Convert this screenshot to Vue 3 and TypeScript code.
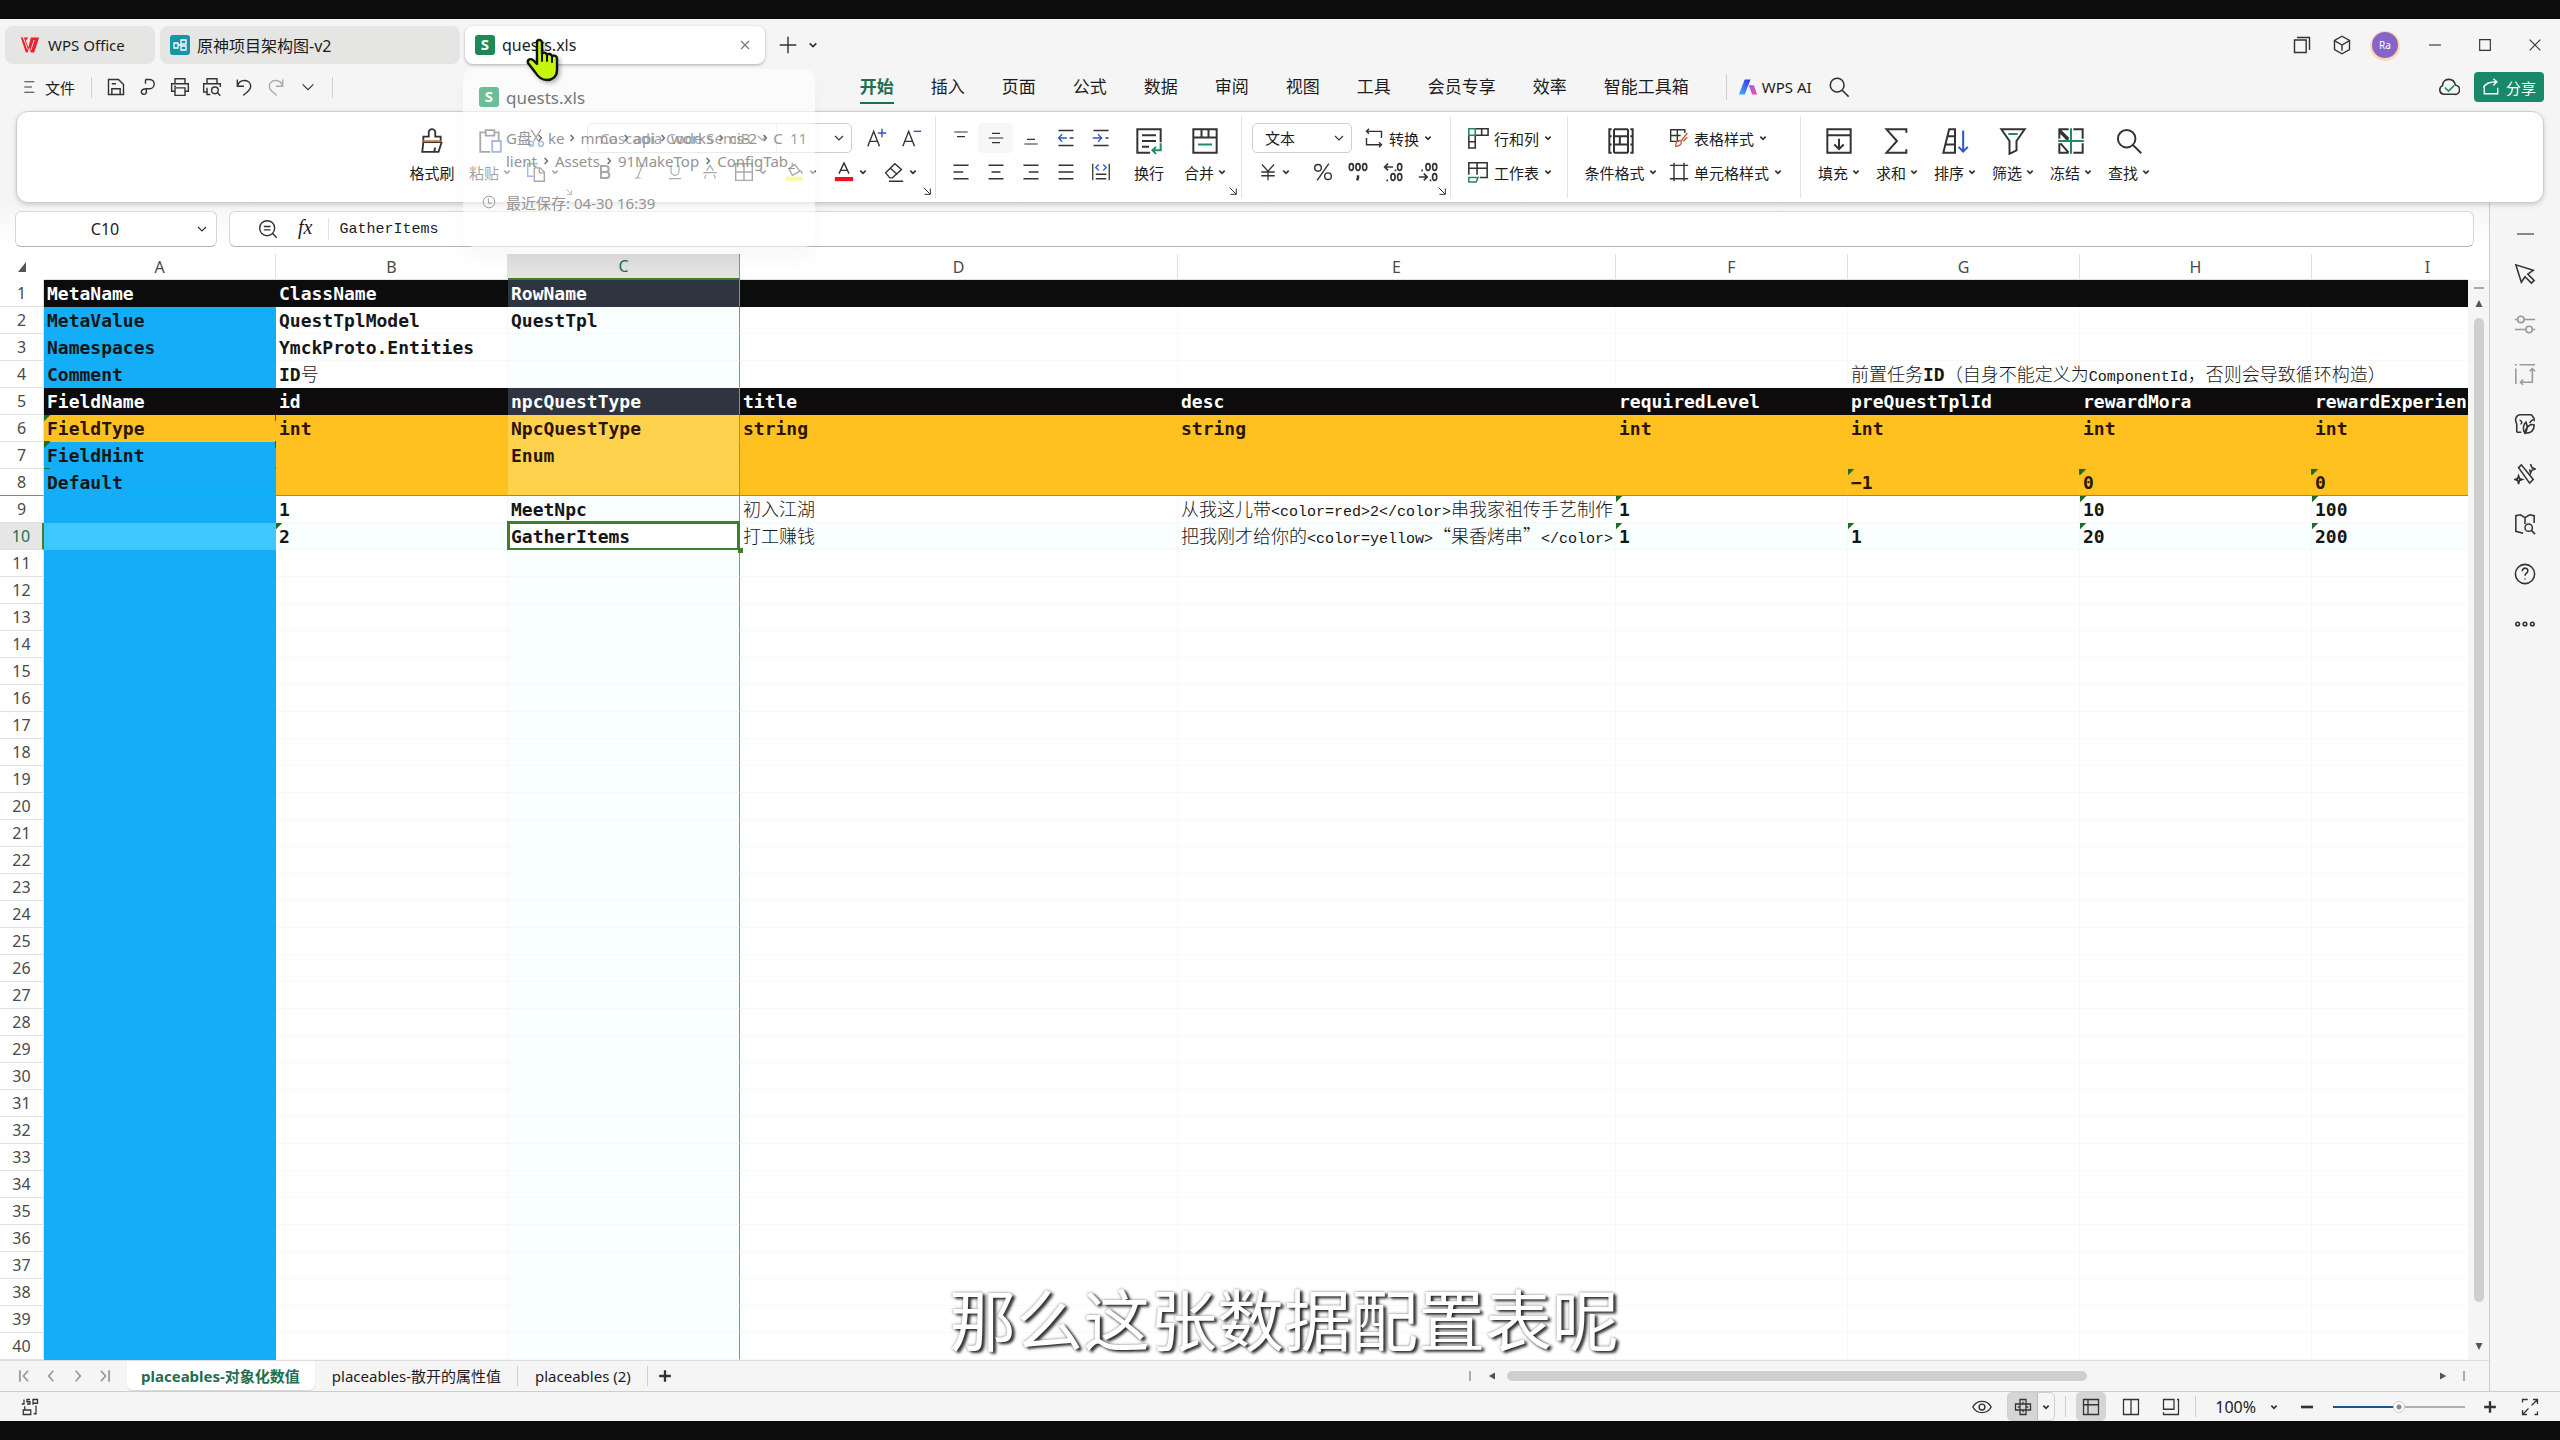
<script setup lang="ts">
import { ref } from 'vue'

type Run = { text: string; kind: 'bold' | 'latin' | 'song' }
type Cell = { text?: string; flag?: boolean; song?: boolean }
type Row = { n: number; tone: string; cells: Cell[] }

const columns = ['A', 'B', 'C', 'D', 'E', 'F', 'G', 'H', 'I']
const wide = ['D', 'E']

const c = (text = '', flag = false): Cell => ({ text, flag })
const s = (text: string): Cell => ({ text, song: true })
const filled: Record<number, { tone: string; cells: Cell[] }> = {
  1: { tone: 'dark', cells: [c('MetaName'), c('ClassName'), c('RowName')] },
  2: { tone: 'plain', cells: [c('MetaValue'), c('QuestTplModel'), c('QuestTpl')] },
  3: { tone: 'plain', cells: [c('Namespaces'), c('YmckProto.Entities')] },
  4: {
    tone: 'plain',
    cells: [c('Comment'), c('ID号'), c(), c(), c(), c(), s('前置任务*ID*（自身不能定义为ComponentId，否则会导致循环构造）')],
  },
  5: {
    tone: 'dark',
    cells: [c('FieldName'), c('id'), c('npcQuestType'), c('title'), c('desc'), c('requiredLevel'), c('preQuestTplId'), c('rewardMora'), c('rewardExperien')],
  },
  6: {
    tone: 'gold all',
    cells: [c('FieldType', true), c('int'), c('NpcQuestType'), c('string'), c('string'), c('int'), c('int'), c('int'), c('int')],
  },
  7: { tone: 'gold', cells: [c('FieldHint', true), c(), c('Enum')] },
  8: { tone: 'gold frozen', cells: [c('Default'), c(), c(), c(), c(), c(), c('−1', true), c('0', true), c('0', true)] },
  9: {
    tone: 'plain',
    cells: [c(), c('1'), c('MeetNpc'), s('初入江湖'), s('从我这儿带<color=red>2</color>串我家祖传手艺制作'), c('1', true), c(), c('10', true), c('100', true)],
  },
  10: {
    tone: 'plain current',
    cells: [c(), c('2', true), c('GatherItems'), s('打工赚钱'), s('把我刚才给你的<color=yellow>“果香烤串”</color>'), c('1', true), c('1', true), c('20', true), c('200', true)],
  },
}

const rows: Row[] = Array.from({ length: 40 }, (_, i) => {
  const src = filled[i + 1]
  return {
    n: i + 1,
    tone: src ? src.tone : 'plain',
    cells: columns.map((_col, j) => (src && src.cells[j]) || {}),
  }
})

/* Splits a cell into runs: *x* is bold, ASCII follows the cell's face, the rest is CJK. */
function runs(cell: Cell): Run[] {
  const parts = (cell.text || '').match(/\*[^*]+\*|[\x20-\x29\x2b-\x7e−]+|[^\x20-\x7e−]+/g) || []
  return parts.map((p) => {
    if (p[0] === '*') return { text: p.slice(1, -1), kind: 'bold' }
    if (/^[\x20-\x7e−]/.test(p)) return { text: p, kind: cell.song ? 'latin' : 'bold' }
    return { text: p, kind: 'song' }
  })
}

const menu = ['开始', '插入', '页面', '公式', '数据', '审阅', '视图', '工具', '会员专享', '效率', '智能工具箱']
const quick = ['save', 'export', 'print', 'preview', 'undo', 'redo', 'chev']
const side = ['cursor', 'sliders', 'frame', 'leaf', 'wand', 'book', 'help', 'dots']
const finals = [
  ['fill', '填充'],
  ['sum', '求和'],
  ['sort', '排序'],
  ['filter', '筛选'],
  ['freeze', '冻结'],
  ['search', '查找'],
]
const crumbs1 = ['G盘', 'ke', 'mmo', 'api', 'works', 'cs-2', 'C']
const crumbs2 = ['lient', 'Assets', '91MakeTop', 'ConfigTab_']

const cellName = ref('C10')
const formula = ref('GatherItems')
const zoom = ref(50)

const G = '#1f8a63'
const B = '#2f55c4'
const icons: Record<string, string> = {
  chev: '<path d="M4 8l8 8 8-8"/>',
  close: '<path d="M4 4l16 16M20 4L4 20"/>',
  plus: '<path d="M12 2v20M2 12h20"/>',
  minus: '<path d="M3 12h18"/>',
  menu: '<path d="M4 3h17M4 12h13M4 21h17"/>',
  save: '<path d="M3 3h12l6 6v12H3zM7 21v-7h10v7M7 8h5"/>',
  export: '<path d="M9 3h5a5 5 0 0 1 0 11h-4c-3 0-6 1-6 4s5 4 6 1V14M9 3v5"/>',
  print: '<path d="M6 8V2h12v6M6 17H2V8h20v9h-4M6 13h12v9H6zM5 11h2"/>',
  preview: '<path d="M6 8V2h12v6M7 18H2V8h20v4M6 13v8h4"/><circle cx="15.500" cy="16" r="4"/><path d="M18.500 19l3.500 3.500"/>',
  undo: '<path d="M4 3v8h8M4 11C7 1 20 3 20 11c0 5-4 7-9 11"/>',
  redo: '<path d="M20 3v8h-8M20 11C17 1 4 3 4 11c0 5 4 7 9 11" stroke="#aaa"/>',
  search: '<circle cx="10" cy="10" r="7.500"/><path d="M15.500 15.500l7 7"/>',
  zoomout: '<circle cx="11" cy="11" r="9"/><path d="M17.500 17.500l5 5M7 9h8M7 13h8"/>',
  windows: '<path d="M3 6h14v15H3zM6 3h15v15"/>',
  box: '<path d="M12 1.500l9 5v11l-9 5-9-5v-11zM3.500 7l8.500 5 8.500-5M12 12v7"/>',
  max: '<path d="M4 4h16v16H4z"/>',
  cloud: `<path d="M6 20a5 5 0 0 1-1-9.500C5 2 17 1 19 10a5 5 0 0 1-1 10z"/><path d="M7.500 12.500l4 4 6-6" stroke="${G}"/>`,
  share: '<path d="M3 11v10h18v-8M2 13c2-6 8-8 18-8M15 1l5 4-5 5"/>',
  brush: '<path d="M9 8V4a3 3 0 0 1 6 0v4h5v5H4V8zM4 13l-1 9h15l3-9"/><path d="M4 12h16" stroke="#e07a4a"/><path d="M14 22l1-4"/>',
  paste: `<path d="M8 4H3v18h9M16 4h4v7M8 2h8v5H8z"/><path d="M14 12h8v10h-8z" stroke="${B}"/>`,
  cut: `<path d="M6 2l9 14M18 2L9 16"/><circle cx="6" cy="19" r="3" stroke="${B}"/><circle cx="18" cy="19" r="3" stroke="${B}"/>`,
  copy: `<path d="M9 17H2V2h12" stroke="${B}"/><path d="M10 7h7l5 5v11H10zM16 7v6h6"/>`,
  bold: '<path d="M6 3h7a4.500 4.500 0 0 1 0 9H6zM6 12h8a4.500 4.500 0 0 1 0 9H6z" stroke-width="3"/>',
  italic: '<path d="M10 3h9M4 21h9M15 3L8 21"/>',
  under: '<path d="M6 2v9a6 6 0 0 0 12 0V2M3 22h18"/>',
  strike: '<path d="M7 10l5-8 5 8M2 13h20M6 16l-2 6M18 16l2 6"/>',
  borders: '<path d="M2 2h20v20H2zM12 2v20M2 12h20"/>',
  paint: '<path d="M10 1v5M6 8l7-5 6 8-9 5zM20 10l2 4"/><path d="M2 20h20" stroke="#f2ee1e" stroke-width="5"/>',
  color: '<path d="M6 14l6-13 6 13M8 10h8"/><path d="M1 20.500h22" stroke="#e8131f" stroke-width="5"/>',
  erase: '<path d="M2 13L13 2l8 7-11 10H7zM7 7l9 8M6 23h17"/>',
  fontup: `<path d="M1 22L8 4l7 18M3 16h10"/><path d="M18 1v10M13 6h10" stroke="${B}"/>`,
  fontdown: `<path d="M1 22L8 4l7 18M3 16h10"/><path d="M14 4h9" stroke="${B}"/>`,
  vtop: '<path d="M2 3h20M6 10h12"/>',
  vmid: '<path d="M6 5h12M1 12h22M6 19h12"/>',
  vbot: '<path d="M6 14h12M2 21h20"/>',
  outdent: `<path d="M2 2h20M2 22h20M17 12h5"/><path d="M13 12H2M7 7l-5 5 5 5" stroke="${B}"/>`,
  indent: `<path d="M2 2h20M2 22h20M18 12h4"/><path d="M1 12h12M8 7l5 5-5 5" stroke="${B}"/>`,
  left: '<path d="M2 3h20M2 12h13M2 21h20"/>',
  center: '<path d="M2 3h20M6 12h12M2 21h20"/>',
  right: '<path d="M2 3h20M9 12h13M2 21h20"/>',
  justify: '<path d="M2 3h20M2 12h20M2 21h20"/>',
  distribute: `<path d="M1 1v22M23 1v22M5 15h14M5 21h14"/><path d="M9 2L5 6l4 4M15 2l4 4-4 4" stroke="${B}"/>`,
  wrap: `<path d="M22 13V2H2v20h11M6 7h12M6 12h12M6 17h6"/><path d="M22 14v6h-7M18 17l-3 3 3 3" stroke="${G}"/>`,
  merge: `<path d="M2 2h20v20H2zM2 9h20M9 2v7M15 2v7"/><path d="M6 15h12" stroke="${G}"/>`,
  convert: '<path d="M6 1L3 4l3 3M3 4h18v8M18 23l3-3-3-3M21 20H3v-8"/>',
  yen: '<path d="M4 2l8 9 8-9M12 11v12M3 12h18M3 17h18"/>',
  percent: '<path d="M19 2L5 22"/><circle cx="6" cy="7" r="4"/><circle cx="18" cy="17" r="4"/>',
  thousand: '<g stroke-width="2"><ellipse cx="4" cy="6" rx="2.500" ry="4"/><ellipse cx="12" cy="6" rx="2.500" ry="4"/><ellipse cx="20" cy="6" rx="2.500" ry="4"/><path d="M12 16v3l-1 3" stroke-width="3"/></g>',
  decup: '<g stroke-width="2"><path d="M12 6H2M6 2L2 6l4 4M15 9v2M5 21v2"/><ellipse cx="20" cy="6" rx="2.500" ry="4"/><ellipse cx="12" cy="18" rx="2.500" ry="4"/><ellipse cx="20" cy="18" rx="2.500" ry="4"/></g>',
  decdown: '<g stroke-width="2"><path d="M1 18h10M7 14l4 4-4 4M15 21v2M5 9v2"/><ellipse cx="20" cy="18" rx="2.500" ry="4"/><ellipse cx="12" cy="6" rx="2.500" ry="4"/><ellipse cx="20" cy="6" rx="2.500" ry="4"/></g>',
  rowcol: `<path d="M9 2h14v7H9M16 2v7M2 9v14h7V9M2 16h7"/><path d="M2 2h7v7H2z" stroke="${G}"/>`,
  sheet: `<path d="M2 15V2h20v16h-8M2 8h20M11 2v13"/><path d="M2 18h10l-2 5H2z" stroke="${G}"/>`,
  cond: '<path d="M4 2H2v20h2M20 2h2v20h-2M6 2v20M18 2v20M6 8h12M6 15h12M2 8h2M2 15h2M11 8v7M20 8h2M20 15h2M6 2h12M6 22h12"/>',
  tstyle: '<path d="M12 16H2V2h17v4M2 9h12M10 2v14"/><path d="M22 6l-7 9M8 22c0-5 2-7 5-7 3 1 3 6-5 7zM22 11l-5 5" stroke="#c9603a"/>',
  cstyle: '<path d="M6 1v22M18 1v22M1 4h22M1 20h22"/>',
  fill: '<path d="M2 2h20v20H2zM2 7h20M12 10v9M8 15l4 4 4-4"/>',
  sum: '<path d="M20 5V2H3l9 10-9 10h17v-3"/>',
  sort: `<path d="M7 2h5v20H2zM5 8h7M4 15h8"/><path d="M19 3v18M15 17l4 4 4-4" stroke="${B}"/>`,
  filter: `<path d="M2 2h20l-7 10v8l-6 3V12z"/><path d="M8 6h8" stroke="${G}"/>`,
  freeze: `<path d="M2 10V2h8M14 2h8v8M22 14v8h-8M10 22H2v-8M2 4l8 8M3 14l7 8M2 2l8 8"/><path d="M12 1v22M1 12h22" stroke="${G}"/>`,
  corner: '<path d="M4 4l15 15M20 6v14H6"/>',
  cursor: '<path d="M2 2l6 19 4-6 7 7 3-3-7-7 6-4z"/>',
  sliders: '<g stroke="#999"><path d="M1 7h3M11 7h12M1 18h12M20 18h3"/><circle cx="7.500" cy="7" r="3.500"/><circle cx="16.500" cy="18" r="3.500"/></g>',
  frame: '<g stroke="#999"><path d="M6 2h17M2 6v17M1 2h2M20 6v15H7M17 9l3-3 3 3M10 18l-3 3 3 3"/></g>',
  leaf: '<path d="M3 21h5M3 21v-9C0 6 3 2 7 2h12l3 4v3M6 8c3 0 3 4 1 4"/><path d="M12 22c-3-4-2-9 1-12 2 4 2 8-1 12zM12 22c0-5 5-11 10-9 0 6-4 9-10 9zM17 11c1-2 2-3 4-4"/>',
  wand: '<path d="M5 5l3-3 13 16-4 4zM18 1l1.500 4 3.500 1.500-3.500 1.500L18 11l-1-4M5 14l1 3 3 1-3 1-1 4-1-4-3-1 3-1z"/>',
  book: '<path d="M10 22l-8-2V3l5-1 5 3 5-3 5 1v8M12 5v7"/><circle cx="16" cy="16" r="4"/><path d="M19 19l4 4"/>',
  help: '<circle cx="12" cy="12" r="10.500"/><path d="M9 9c0-5 7-4 6 0 0 2-3 2-3 5M12 17v1"/>',
  dots: '<circle cx="4" cy="12" r="2"/><circle cx="12" cy="12" r="2"/><circle cx="20" cy="12" r="2"/>',
  first: '<path d="M5 2v20M19 3l-8 9 8 9"/>',
  prev: '<path d="M16 3l-8 9 8 9"/>',
  next: '<path d="M8 3l8 9-8 9"/>',
  last: '<path d="M19 2v20M5 3l8 9-8 9"/>',
  eye: '<path d="M1 12C6 3 18 3 23 12 18 21 6 21 1 12z"/><circle cx="12" cy="12" r="3.500"/>',
  cross: '<path d="M8 8V2h8v6h6v8h-6v6H8v-6H2V8zM8 8h8v8H8zM12 5v2M12 17v2M5 12h2M17 12h2"/>',
  vnormal: '<path d="M2 2h20v20H2zM8 2v20M2 9h20"/>',
  vpage: '<path d="M2 2h20v20H2zM12 2v20"/>',
  vbreak: '<path d="M2 2h14v13H2zM20 2h2v20H2v-3"/>',
  full: '<path d="M9 2H2v4M2 18v4h4M22 18v4h-4M14 10l8-8M16 2h6v6M10 14l-8 8M2 16v6h6"/>',
  macro: '<path d="M4 2v6H1M12 2H8v3h4v3H8M16 9V2h6v5h-6M20 10v11h-3M5 11v5h8M3 22v-6h10v6z"/>',
  clock: '<circle cx="12" cy="12" r="10"/><path d="M11 6v8h6"/>',
}
</script>

<template>
  <div class="screen">
    <div class="window">
      <header class="tabstrip">
        <button class="doc home">
          <svg class="i20" viewBox="0 0 24 24"><path d="M1 3h9l-3 4 3 8 3-12h10l-6 18h-4l-2-6-2 6H7z" fill="#e8222e" /><path d="M4 3l5 14M17 6l-4 12" stroke="#fff" stroke-width="1" /></svg>
          WPS Office
        </button>
        <button class="doc">
          <svg class="i20" viewBox="0 0 20 20"><rect width="20" height="20" rx="3" fill="#1795a8" /><path d="M4 8h4v5H4zM8 10h3M11 5h5v4h-5zM11 11h5v4h-5z" stroke="#fff" fill="none" stroke-width="1.300" /></svg>
          原神项目架构图-v2
        </button>
        <button class="doc active">
          <span class="sbadge">S</span>
          quests.xls
          <svg class="i12 line end" viewBox="0 0 24 24" v-html="icons.close"></svg>
        </button>
        <button class="bare add" aria-label="新建"><svg class="i20 line" viewBox="0 0 24 24" v-html="icons.plus"></svg></button>
        <button class="bare" aria-label="标签列表"><svg class="i10 heavy" viewBox="0 0 24 24" v-html="icons.chev"></svg></button>
        <div class="winctl">
          <button class="bare" aria-label="窗口"><svg class="i20 line" viewBox="0 0 24 24" v-html="icons.windows"></svg></button>
          <button class="bare" aria-label="应用"><svg class="i20 line" viewBox="0 0 24 24" v-html="icons.box"></svg></button>
          <button class="avatar">Ra</button>
          <button class="bare w50" aria-label="最小化"><svg class="i16 line" viewBox="0 0 24 24" v-html="icons.minus"></svg></button>
          <button class="bare w50" aria-label="最大化"><svg class="i16 line" viewBox="0 0 24 24" v-html="icons.max"></svg></button>
          <button class="bare w50" aria-label="关闭"><svg class="i16 line" viewBox="0 0 24 24" v-html="icons.close"></svg></button>
        </div>
      </header>

      <nav class="menubar">
        <div class="quick">
          <button class="bare file"><svg class="i14 line" viewBox="0 0 24 24" v-html="icons.menu"></svg>文件</button>
          <i class="vsep"></i>
          <div class="quickset">
            <button v-for="q in quick" :key="q" class="bare w32" :aria-label="q">
              <svg class="line" :class="q === 'chev' ? 'i16' : 'i20'" viewBox="0 0 24 24" v-html="icons[q]"></svg>
            </button>
          </div>
          <i class="vsep"></i>
        </div>
        <div class="menus">
          <button v-for="(m, i) in menu" :key="m" class="bare menu" :class="{ on: i === 0 }">{{ m }}</button>
          <i class="vsep"></i>
          <button class="bare ai">
            <svg class="i20" viewBox="0 0 24 24">
              <defs>
                <linearGradient id="aiBlue" x1="0" y1="1" x2="1" y2="0"><stop offset="0" stop-color="#35b8ff" /><stop offset="1" stop-color="#3a2cf0" /></linearGradient>
                <linearGradient id="aiPink" x1="0" y1="0" x2="1" y2="1"><stop offset="0" stop-color="#8a5bff" /><stop offset="1" stop-color="#ff4fa0" /></linearGradient>
              </defs>
              <path d="M8 3h7L8 21H1z" fill="url(#aiBlue)" /><path d="M13 10h6l4 11h-6z" fill="url(#aiPink)" />
            </svg>
            WPS AI
          </button>
          <button class="bare" aria-label="搜索"><svg class="i22 line" viewBox="0 0 24 24" v-html="icons.search"></svg></button>
        </div>
        <div class="sharing">
          <svg class="i22 line" viewBox="0 0 24 24" v-html="icons.cloud"></svg>
          <button class="share"><svg class="i18 line" viewBox="0 0 24 24" v-html="icons.share"></svg>分享</button>
        </div>
      </nav>

      <section class="ribbon">
        <div class="group g1">
          <button class="big w64"><svg class="i26 line" viewBox="0 0 24 24" v-html="icons.brush"></svg><span>格式刷</span></button>
          <button class="big w52"><svg class="i26 line" viewBox="0 0 24 24" v-html="icons.paste"></svg><span>粘贴<svg class="i8 heavy" viewBox="0 0 24 24" v-html="icons.chev"></svg></span></button>
          <div class="stack clip">
            <div class="line-row"><button class="bare" aria-label="剪切"><svg class="i20 line" viewBox="0 0 24 24" v-html="icons.cut"></svg></button></div>
            <div class="line-row"><button class="bare duo" aria-label="复制"><svg class="i20 line" viewBox="0 0 24 24" v-html="icons.copy"></svg><svg class="i8 heavy" viewBox="0 0 24 24" v-html="icons.chev"></svg></button></div>
          </div>
          <div class="stack">
            <div class="line-row fonts">
              <div class="combo font">
                <select class="face" aria-label="字体"><option>Cascadia Code SemiB</option></select>
                <svg class="i12 line" viewBox="0 0 24 24" v-html="icons.chev"></svg>
                <select class="size" aria-label="字号"><option>11</option></select>
                <svg class="i12 line" viewBox="0 0 24 24" v-html="icons.chev"></svg>
              </div>
              <button class="bare" aria-label="增大字号"><svg class="i20 line" viewBox="0 0 24 24" v-html="icons.fontup"></svg></button>
              <button class="bare" aria-label="减小字号"><svg class="i20 line" viewBox="0 0 24 24" v-html="icons.fontdown"></svg></button>
            </div>
            <div class="line-row">
              <button v-for="k in ['bold', 'italic', 'under', 'strike']" :key="k" class="bare w35" :aria-label="k"><svg class="i16 line" viewBox="0 0 24 24" v-html="icons[k]"></svg></button>
              <button v-for="k in ['borders', 'paint', 'color', 'erase']" :key="k" class="bare duo w50 start" :aria-label="k">
                <svg class="i20 line" viewBox="0 0 24 24" v-html="icons[k]"></svg><svg class="i8 heavy" viewBox="0 0 24 24" v-html="icons.chev"></svg>
              </button>
            </div>
          </div>
          <svg class="launch i8 line clipcorner" viewBox="0 0 24 24" v-html="icons.corner"></svg>
          <svg class="launch i10 line" viewBox="0 0 24 24" v-html="icons.corner"></svg>
        </div>

        <div class="group g2">
          <div class="stack">
            <div class="line-row">
              <button v-for="k in ['vtop', 'vmid', 'vbot', 'outdent', 'indent']" :key="k" class="bare w35" :class="{ soft: k === 'vmid' }" :aria-label="k"><svg class="i18 line" :class="{ i16: k[0] === 'v' }" viewBox="0 0 24 24" v-html="icons[k]"></svg></button>
            </div>
            <div class="line-row">
              <button v-for="k in ['left', 'center', 'right', 'justify', 'distribute']" :key="k" class="bare w35" :aria-label="k"><svg class="i18 line" viewBox="0 0 24 24" v-html="icons[k]"></svg></button>
            </div>
          </div>
          <button class="big w62"><svg class="i28 line" viewBox="0 0 24 24" v-html="icons.wrap"></svg><span>换行</span></button>
          <button class="big w50"><svg class="i28 line" viewBox="0 0 24 24" v-html="icons.merge"></svg><span>合并<svg class="i8 heavy" viewBox="0 0 24 24" v-html="icons.chev"></svg></span></button>
          <svg class="launch i10 line" viewBox="0 0 24 24" v-html="icons.corner"></svg>
        </div>

        <div class="group g3">
          <div class="stack">
            <div class="line-row numfmt">
              <div class="combo num">
                <select aria-label="数字格式"><option>文本</option></select>
                <svg class="i12 line" viewBox="0 0 24 24" v-html="icons.chev"></svg>
              </div>
              <button class="bare duo"><svg class="i20 line" viewBox="0 0 24 24" v-html="icons.convert"></svg>转换<svg class="i8 heavy" viewBox="0 0 24 24" v-html="icons.chev"></svg></button>
            </div>
            <div class="line-row">
              <button class="bare duo w53 start" aria-label="货币"><svg class="i18 line" viewBox="0 0 24 24" v-html="icons.yen"></svg><svg class="i8 heavy" viewBox="0 0 24 24" v-html="icons.chev"></svg></button>
              <button v-for="k in ['percent', 'thousand', 'decup', 'decdown']" :key="k" class="bare w35" :aria-label="k"><svg class="i20 line" viewBox="0 0 24 24" v-html="icons[k]"></svg></button>
            </div>
          </div>
          <svg class="launch i10 line" viewBox="0 0 24 24" v-html="icons.corner"></svg>
        </div>

        <div class="group g4">
          <div class="stack">
            <div class="line-row"><button class="bare duo"><svg class="i22 line" viewBox="0 0 24 24" v-html="icons.rowcol"></svg>行和列<svg class="i8 heavy" viewBox="0 0 24 24" v-html="icons.chev"></svg></button></div>
            <div class="line-row"><button class="bare duo"><svg class="i22 line" viewBox="0 0 24 24" v-html="icons.sheet"></svg>工作表<svg class="i8 heavy" viewBox="0 0 24 24" v-html="icons.chev"></svg></button></div>
          </div>
        </div>

        <div class="group g5">
          <button class="big w97"><svg class="i28 line" viewBox="0 0 24 24" v-html="icons.cond"></svg><span>条件格式<svg class="i8 heavy" viewBox="0 0 24 24" v-html="icons.chev"></svg></span></button>
          <div class="stack">
            <div class="line-row"><button class="bare duo"><svg class="i20 line" viewBox="0 0 24 24" v-html="icons.tstyle"></svg>表格样式<svg class="i8 heavy" viewBox="0 0 24 24" v-html="icons.chev"></svg></button></div>
            <div class="line-row"><button class="bare duo"><svg class="i20 line" viewBox="0 0 24 24" v-html="icons.cstyle"></svg>单元格样式<svg class="i8 heavy" viewBox="0 0 24 24" v-html="icons.chev"></svg></button></div>
          </div>
        </div>

        <div class="group g6">
          <button v-for="[k, label] in finals" :key="k" class="big w58">
            <svg class="i28 line" viewBox="0 0 24 24" v-html="icons[k]"></svg>
            <span>{{ label }}<svg class="i8 heavy" viewBox="0 0 24 24" v-html="icons.chev"></svg></span>
          </button>
        </div>
      </section>

      <div class="body">
        <main class="book">
          <div class="formulabar">
            <div class="namebox">
              <input v-model="cellName" aria-label="名称框" />
              <svg class="i12 line" viewBox="0 0 24 24" v-html="icons.chev"></svg>
            </div>
            <div class="fxbox">
              <svg class="i20 line" viewBox="0 0 24 24" v-html="icons.zoomout"></svg>
              <span class="fx">fx</span>
              <input v-model="formula" aria-label="编辑栏" />
            </div>
          </div>

          <div class="gridwrap">
            <div class="gridclip">
              <table class="grid">
                <colgroup>
                  <col class="rowhead" />
                  <col v-for="k in columns" :key="k" :class="wide.includes(k) ? 'wide' : 'norm'" />
                </colgroup>
                <thead>
                  <tr>
                    <th class="origin"><svg viewBox="0 0 8 10"><path d="M8 0v10H0z" fill="#555" /></svg></th>
                    <th v-for="k in columns" :key="k" :class="{ sel: k === 'C' }">{{ k }}</th>
                  </tr>
                </thead>
                <tbody>
                  <tr v-for="r in rows" :key="r.n" :class="r.tone">
                    <th>{{ r.n }}</th>
                    <td v-for="(cell, j) in r.cells" :key="j" :class="{ a: j === 0, cc: j === 2, picked: r.n === 10 && j === 2, flag: cell.flag }">
                      <span v-for="(run, x) in runs(cell)" :key="x" :class="run.kind">{{ run.text }}</span>
                    </td>
                  </tr>
                </tbody>
              </table>
            </div>
            <div class="vscroll">
              <i class="dash"></i>
              <svg class="arrow" viewBox="0 0 8 8"><path d="M4 0l4 8H0z" /></svg>
              <i class="thumb"></i>
              <svg class="arrow down" viewBox="0 0 8 8"><path d="M0 0h8L4 8z" /></svg>
            </div>
          </div>

          <div class="sheetbar">
            <div class="sheetnav">
              <button v-for="k in ['first', 'prev', 'next', 'last']" :key="k" class="bare" :aria-label="k"><svg class="i14 grey" viewBox="0 0 24 24" v-html="icons[k]"></svg></button>
            </div>
            <button class="sheet on">placeables-对象化数值</button>
            <button class="sheet">placeables-散开的属性值</button>
            <button class="sheet">placeables (2)</button>
            <button class="bare addsheet" aria-label="新建工作表"><svg class="i14 heavy" viewBox="0 0 24 24" v-html="icons.plus"></svg></button>
            <div class="hscroll">
              <i class="tick"></i>
              <svg class="harrow" viewBox="0 0 8 8"><path d="M8 0v8L1 4z" /></svg>
              <div class="track"><i></i></div>
              <svg class="harrow" viewBox="0 0 8 8"><path d="M0 0v8l7-4z" /></svg>
              <i class="tick"></i>
            </div>
          </div>
        </main>

        <aside class="sidebar">
          <i class="collapse"></i>
          <button v-for="k in side" :key="k" class="bare" :aria-label="k"><svg class="i22 line" viewBox="0 0 24 24" v-html="icons[k]"></svg></button>
        </aside>
      </div>

      <footer class="status">
        <svg class="i18 line" viewBox="0 0 24 24" v-html="icons.macro"></svg>
        <div class="views">
          <button class="bare eye" aria-label="护眼"><svg class="i20 line" viewBox="0 0 24 24" v-html="icons.eye"></svg></button>
          <button class="split" aria-label="聚焦"><span><svg class="i18 line" viewBox="0 0 24 24" v-html="icons.cross"></svg></span><svg class="i8 heavy" viewBox="0 0 24 24" v-html="icons.chev"></svg></button>
          <i class="vsep"></i>
          <button v-for="k in ['vnormal', 'vpage', 'vbreak']" :key="k" class="bare view" :class="{ on: k === 'vnormal' }" :aria-label="k"><svg class="i18 line" viewBox="0 0 24 24" v-html="icons[k]"></svg></button>
          <i class="vsep"></i>
          <button class="bare pct">100%<svg class="i8 heavy" viewBox="0 0 24 24" v-html="icons.chev"></svg></button>
          <button class="bare" aria-label="缩小"><svg class="i16 heavy" viewBox="0 0 24 24" v-html="icons.minus"></svg></button>
          <input v-model="zoom" type="range" min="0" max="100" aria-label="缩放" />
          <button class="bare" aria-label="放大"><svg class="i14 heavy" viewBox="0 0 24 24" v-html="icons.plus"></svg></button>
          <button class="bare fs" aria-label="全屏"><svg class="i18 line" viewBox="0 0 24 24" v-html="icons.full"></svg></button>
        </div>
      </footer>

      <div class="tip">
        <div class="tiphead"><span class="sbadge">S</span>quests.xls</div>
        <div class="crumbs">
          <template v-for="(t, i) in crumbs1" :key="t"><svg v-if="i" class="i8 heavy" viewBox="0 0 24 24" v-html="icons.next"></svg><span>{{ t }}</span></template>
        </div>
        <div class="crumbs">
          <template v-for="(t, i) in crumbs2" :key="t"><svg v-if="i" class="i8 heavy" viewBox="0 0 24 24" v-html="icons.next"></svg><span>{{ t }}</span></template>
        </div>
        <div class="saved"><svg class="i14 line" viewBox="0 0 24 24" v-html="icons.clock"></svg>最近保存: 04-30 16:39</div>
      </div>

      <svg class="hand" viewBox="0 0 36 44">
        <path d="M11 3c2-2 5-1 5 2v11c1-2 4-2 5 1 2-2 4-1 5 1 3-1 5 0 5 3v11c0 7-5 10-10 10-6 0-9-3-12-8L2 25c-1-3 2-5 5-3l4 4z" fill="#c8f60b" stroke="#111" stroke-width="2.400" stroke-linejoin="round" />
        <path d="M16 15v8M21 17v6M26 18v6" stroke="#111" stroke-width="2" stroke-linecap="round" />
      </svg>

      <p class="caption">那么这张数据配置表呢</p>
    </div>
  </div>
</template>

<style>
body {
  margin: 0;
  background: #0c0c0c;
}
</style>

<style scoped>
.screen {
  box-sizing: border-box;
  min-height: 100vh;
  padding: 19px 0;
  background: #0c0c0c;
  display: flex;
  flex-direction: column;
  font-family: 'Noto Sans', 'Noto Sans CJK SC', sans-serif;
  font-size: 15px;
  color: #1c1c1c;
}
.window {
  position: relative;
  flex: 1;
  display: flex;
  flex-direction: column;
  background: #f5f5f5;
  overflow: hidden;
}
button,
input,
select {
  font: inherit;
  color: inherit;
  border: 0;
  padding: 0;
  margin: 0;
  background: none;
  box-sizing: border-box;
}
i {
  display: block;
  flex: none;
}
svg {
  display: block;
  flex: none;
}
.line,
.heavy,
.grey {
  fill: none;
  stroke: #333;
  stroke-width: 1.7;
}
.heavy {
  stroke-width: 4;
}
.i8.heavy {
  stroke-width: 5;
}
.i12.line,
.i10.line,
.i8.line {
  stroke-width: 2.4;
}
.grey {
  stroke: #999;
  stroke-width: 3;
}
.i8 { width: 8px; height: 8px; }
.i10 { width: 10px; height: 10px; }
.i12 { width: 12px; height: 12px; }
.i14 { width: 14px; height: 14px; }
.i18 { width: 18px; height: 18px; }
.i16 { width: 16px; height: 16px; }
.i20 { width: 20px; height: 20px; }
.i22 { width: 22px; height: 22px; }
.i26 { width: 26px; height: 26px; }
.i28 { width: 28px; height: 28px; }
.w32 { width: 32px; }
.w35 { width: 35px; }
.w50 { width: 50px; }
.w52 { width: 52px; }
.w53 { width: 53px; }
.w58 { width: 58px; }
.w62 { width: 62px; }
.w64 { width: 64px; }
.w97 { width: 97px; }
.bare {
  display: flex;
  align-items: center;
  justify-content: center;
  white-space: nowrap;
}
.vsep {
  width: 1px;
  height: 21px;
  background: #cfcfcf;
}

/* document tabs */
.tabstrip {
  display: flex;
  align-items: center;
  height: 49px;
  padding: 3px 0 0 5px;
  box-sizing: border-box;
  font-size: 16px;
}
.doc {
  display: flex;
  align-items: center;
  gap: 7px;
  width: 300px;
  height: 38px;
  padding: 0 10px;
  margin-right: 5px;
  border-radius: 8px;
  background: #e5e5e4;
  white-space: nowrap;
}
.doc.home {
  width: 150px;
  gap: 8px;
  padding: 0 15px;
  font-size: 15px;
}
.doc.active {
  background: #fff;
  box-shadow: 0 1px 3px rgba(0, 0, 0, 0.3);
  padding-right: 14px;
}
.end {
  margin-left: auto;
}
.doc .end {
  stroke: #777;
}
.add {
  margin: 0 10px 0 8px;
}
.sbadge {
  display: block;
  width: 20px;
  height: 20px;
  line-height: 19px;
  border-radius: 3px;
  background: #1c8a56;
  color: #fff;
  font-size: 15px;
  font-weight: 700;
  text-align: center;
}
.winctl {
  display: flex;
  align-items: center;
  gap: 20px;
  width: 268px;
  margin-left: auto;
}
.winctl .w50 {
  flex: none;
  margin-left: -20px;
}
.winctl .avatar + .w50 {
  margin-left: -8px;
}
.avatar {
  flex: none;
  width: 26px;
  height: 26px;
  border-radius: 50%;
  background: #8566c8;
  box-shadow: 0 1px 0 2px #fcd9b2;
  color: #fff;
  font-size: 10px;
}

/* menus */
.menubar {
  display: flex;
  align-items: center;
  height: 43px;
  padding-bottom: 5px;
  box-sizing: border-box;
}
.quick {
  display: flex;
  align-items: center;
  flex: 0 0 33%;
  padding-left: 22px;
  box-sizing: border-box;
}
.file {
  gap: 9px;
  margin-right: 16px;
}
.quickset {
  display: flex;
  padding: 0 8px;
}
.menus {
  display: flex;
  align-items: center;
  font-size: 17px;
  padding-left: 15px;
}
.menu {
  position: relative;
  height: 34px;
  margin-right: 37px;
  line-height: 34px;
}
.menu.on {
  color: #1d6f50;
  font-weight: 700;
}
.menu.on::after {
  content: '';
  position: absolute;
  left: 0;
  right: 0;
  bottom: 0;
  height: 2px;
  background: #1d6f50;
}
.menus .vsep {
  margin-right: 11px;
  height: 26px;
}
.ai {
  gap: 4px;
  margin-right: 16px;
  font-size: 15px;
}
.sharing {
  display: flex;
  align-items: center;
  gap: 14px;
  margin: 0 16px 0 auto;
}
.share {
  display: flex;
  align-items: center;
  justify-content: center;
  gap: 6px;
  width: 70px;
  height: 30px;
  border-radius: 4px;
  background: #188a6a;
  color: #fff;
}
.share svg {
  stroke: #fff;
}

/* ribbon */
.ribbon {
  position: relative;
  z-index: 1;
  display: flex;
  justify-content: center;
  height: 92px;
  margin: 0 16px;
  box-sizing: border-box;
  border: 1px solid #cdcdcd;
  border-radius: 12px;
  background: #fff;
  box-shadow: 0 2px 5px rgba(0, 0, 0, 0.16);
}
.group {
  position: relative;
  display: flex;
  align-items: flex-start;
  box-sizing: border-box;
  height: 82px;
  margin-top: 4px;
  padding-top: 7px;
  border-right: 1px solid #e2e2e2;
}
.g1 { width: 536px; }
.g2 { width: 306px; padding-left: 7px; }
.g3 { width: 209px; padding-left: 10px; }
.g4 { width: 117px; padding-left: 16px; }
.g5 { width: 233px; padding-left: 4px; }
.g6 { width: 359px; padding-left: 9px; border-right: 0; }
.big {
  display: flex;
  flex-direction: column;
  align-items: center;
  white-space: nowrap;
}
.big > svg {
  margin: 4px 0 2px;
}
.big > svg.i26 {
  margin: 5px 0 3px;
}
.big > span {
  display: flex;
  align-items: center;
  gap: 4px;
  height: 30px;
}
.stack {
  display: flex;
  flex-direction: column;
  gap: 4px;
}
.line-row {
  display: flex;
  height: 30px;
}
.clip {
  width: 61px;
  padding-left: 10px;
}
.duo {
  gap: 5px;
}
.start {
  justify-content: flex-start;
  padding-left: 7px;
}
.fonts {
  gap: 15px;
}
.combo {
  display: flex;
  align-items: center;
  box-sizing: border-box;
  height: 30px;
  border: 1px solid #cfcfcf;
  border-radius: 5px;
  padding: 0 6px 0 12px;
}
.combo select {
  appearance: none;
  flex: 1;
  min-width: 0;
  height: 28px;
}
.combo.font {
  width: 265px;
}
.combo .face {
  flex: none;
  width: 156px;
}
.combo .size {
  margin-left: 8px;
  padding-left: 13px;
  border-left: 1px solid #e2e2e2;
}
.combo.num {
  width: 100px;
}
.numfmt {
  gap: 12px;
}
.soft {
  background: #f7f7f7;
  border-radius: 4px;
}
.launch {
  position: absolute;
  right: 3px;
  bottom: 2px;
}
.clipcorner {
  right: 362px;
}

/* workbook */
.body {
  display: flex;
  flex: 1;
}
.book {
  flex: 1;
  min-width: 0;
  display: flex;
  flex-direction: column;
}
.formulabar {
  display: flex;
  gap: 12px;
  box-sizing: border-box;
  height: 51px;
  padding: 8px 15px 7px;
  background: linear-gradient(#f5f5f5, #fff 80%);
}
.namebox,
.fxbox {
  display: flex;
  align-items: center;
  box-sizing: border-box;
  border: 1px solid #d6d6d6;
  border-bottom-color: #b4b4b4;
  border-radius: 6px;
  background: #fff;
}
.namebox {
  width: 202px;
  padding-right: 8px;
}
.namebox input {
  flex: 1;
  min-width: 0;
  padding-right: 2px;
  text-align: center;
  font-size: 16px;
}
.fxbox {
  flex: 1;
  padding-left: 28px;
}
.fx {
  padding: 0 16px 3px 20px;
  font: italic 20px 'Liberation Serif', serif;
}
.fxbox input {
  flex: 1;
  height: 22px;
  padding-left: 10px;
  border-left: 1px solid #e2e2e2;
  font: 15px 'Liberation Mono', monospace;
}
.gridwrap {
  display: flex;
  flex: 1;
  background: #fff;
}
.gridclip {
  flex: 1;
  min-width: 0;
  overflow: hidden;
}
.grid {
  table-layout: fixed;
  width: 2112px;
  border-collapse: separate;
  border-spacing: 0;
}
.rowhead { width: 44px; }
.norm { width: 232px; }
.wide { width: 438px; }
.grid th,
.grid td {
  box-sizing: border-box;
  height: 27px;
  padding: 0;
  white-space: nowrap;
  border: solid #f6f8f9;
  border-width: 0 1px 1px 0;
}
.grid th {
  font-weight: 400;
  font-size: 16px;
  line-height: 24px;
  color: #4a4a4a;
  border-color: #e0e0e0;
}
.grid thead th {
  height: 26px;
}
.grid thead th.sel {
  background: linear-gradient(#dcdcdc, #e4e4e4);
  color: #1d6f50;
  border-right-color: #5aa88c;
  border-bottom: 2px solid #3f7f2a;
}
.grid th.origin {
  border-color: transparent;
}
.origin svg {
  width: 8px;
  height: 10px;
  margin-left: 18px;
}
.grid td {
  position: relative;
  padding: 2px 0 0 3px;
  font-family: 'DejaVu Sans Mono', monospace;
  font-size: 18px;
  line-height: 24px;
  color: #161616;
}
.grid td span {
  line-height: 0;
}
.bold {
  font-weight: 700;
}
.latin {
  font-family: 'Liberation Mono', monospace;
  font-size: 15px;
}
.song {
  font-family: 'Noto Sans CJK SC', sans-serif;
  font-weight: 300;
}
.grid td.a {
  background: #14aef8;
  border-color: transparent;
}
.grid td.cc {
  background: #f9feff;
  border-right-color: #5aa88c;
}
.grid .dark td {
  background: #0c0c0c;
  color: #fff;
  border-color: transparent;
}
.grid .dark td.cc {
  background: #2f3540;
  border-right-color: #5aa88c;
}
.grid .gold td {
  background: #ffc11f;
  color: #2a1508;
  border-color: transparent;
}
.grid .gold td.a {
  background: #14aef8;
  color: #161616;
}
.grid .gold.all td.a {
  background: #ffc11f;
  color: #2a1508;
}
.grid .gold td.cc {
  background: #ffd24e;
  border-right-color: #5aa88c;
}
.grid .frozen th,
.grid .frozen td,
.grid .frozen td.a {
  border-bottom-color: #5aa860;
}
.grid .current td {
  background: #f9feff;
}
.grid .current td.a {
  background: #3fc8ff;
}
.grid .current th {
  background: #e6e6e6;
  color: #1d6f50;
  border-right: 2px solid #3f7f2a;
}
.grid .current td.picked {
  background: #fff;
}
.picked::after {
  content: '';
  position: absolute;
  inset: -2px -1px -2px -1px;
  border: 3px solid #3f7f2a;
}
.picked::before {
  content: '';
  position: absolute;
  z-index: 1;
  right: -4px;
  bottom: -4px;
  width: 5px;
  height: 5px;
  background: #3f7f2a;
}
.flag {
  background-image: linear-gradient(135deg, #1d6b2a 4px, transparent 5px) !important;
}
.vscroll {
  display: flex;
  flex-direction: column;
  align-items: center;
  width: 21px;
  margin-top: 26px;
  padding: 7px 0 10px;
  background: #f5f5f5;
  box-sizing: border-box;
}
.dash {
  width: 10px;
  height: 2px;
  background: #aaa;
}
.arrow {
  width: 8px;
  height: 7px;
  margin: 11px 0;
  fill: #555;
}
.thumb {
  width: 10px;
  flex: 1;
  border-radius: 5px;
  background: #cfcfcf;
}
.arrow.down {
  margin: 41px 0 0;
}

/* sheet tabs */
.sheetbar {
  display: flex;
  align-items: center;
  height: 31px;
  box-sizing: border-box;
  border-top: 1px solid #dedede;
  font-size: 15px;
}
.sheetnav {
  display: flex;
  gap: 13px;
  width: 127px;
  padding-left: 17px;
  box-sizing: border-box;
}
.sheet {
  height: 20px;
  line-height: 20px;
  padding: 0 16px 0 17px;
  border-right: 1px solid #cfcfcf;
  white-space: nowrap;
}
.sheet.on {
  align-self: flex-start;
  height: 29px;
  padding: 0 15px 0 14px;
  border: 0;
  border-radius: 0 0 6px 6px;
  background: #fff;
  box-shadow: 0 1px 1px rgba(0, 0, 0, 0.12);
  color: #1d6f50;
  font-weight: 700;
}
.addsheet {
  margin-left: 10px;
}
.hscroll {
  display: flex;
  align-items: center;
  width: 40%;
  margin: 0 24px 0 auto;
}
.tick {
  width: 2px;
  height: 10px;
  background: #aaa;
}
.harrow {
  width: 7px;
  height: 8px;
  margin: 0 12px 0 17px;
  fill: #555;
}
.track + .harrow {
  margin: 0 16px 0 12px;
}
.track {
  flex: 1;
}
.track i {
  width: 63%;
  height: 10px;
  border-radius: 5px;
  background: #cfcfcf;
}

/* right rail */
.sidebar {
  display: flex;
  flex-direction: column;
  align-items: center;
  width: 71px;
  box-sizing: border-box;
  padding-top: 30px;
  border-left: 1px solid #cdcdcd;
}
.collapse {
  width: 17px;
  height: 2px;
  margin-bottom: 14px;
  background: #888;
}
.sidebar .bare {
  width: 50px;
  height: 50px;
}

/* status bar */
.status {
  display: flex;
  align-items: center;
  justify-content: space-between;
  height: 30px;
  box-sizing: border-box;
  padding: 0 21px;
  border-top: 1px solid #cdcdcd;
}
.views {
  display: flex;
  align-items: center;
}
.eye {
  margin-right: 15px;
}
.split {
  display: flex;
  align-items: center;
  gap: 4px;
  width: 48px;
  height: 29px;
  border: 1px solid #cfcfcf;
  border-radius: 5px;
  margin-right: 10px;
}
.split span {
  display: flex;
  align-items: center;
  justify-content: center;
  width: 29px;
  height: 27px;
  background: #d5d5d5;
  border-right: 1px solid #bbb;
}
.view {
  width: 30px;
  height: 29px;
  margin: 0 0 0 10px;
  border-radius: 5px;
}
.view.on {
  background: #d5d5d5;
}
.view + .vsep {
  margin-left: 9px;
}
.pct {
  gap: 14px;
  margin: 0 21px 0 19px;
  font-size: 16px;
}
.views input {
  appearance: none;
  width: 132px;
  height: 14px;
  margin: 0 18px;
  background: linear-gradient(90deg, #24508c 50%, #b0b0b0 50%) center / 100% 2px no-repeat;
}
.views input::-webkit-slider-thumb {
  appearance: none;
  width: 12px;
  height: 12px;
  border-radius: 50%;
  border: 1px solid #ccc;
  background: radial-gradient(#888 2px, #fff 3px);
}
.fs {
  margin-left: 24px;
}

/* fading tab preview */
.tip {
  position: absolute;
  z-index: 3;
  left: 463px;
  top: 50px;
  width: 352px;
  height: 178px;
  box-sizing: border-box;
  padding: 16px 10px 0 16px;
  border-radius: 10px;
  background: rgba(255, 255, 255, 0.58);
  box-shadow: 0 12px 20px rgba(0, 0, 0, 0.03);
  font-size: 15px;
  color: #949494;
}
.tiphead {
  display: flex;
  align-items: center;
  gap: 7px;
  height: 24px;
  font-size: 17px;
  color: #777;
}
.tip .sbadge {
  background: #6dbd98;
}
.crumbs {
  display: flex;
  align-items: center;
  gap: 5px;
  height: 23px;
  padding-left: 27px;
  white-space: nowrap;
}
.tiphead + .crumbs {
  gap: 4px;
  margin-top: 17px;
}
.crumbs svg {
  stroke: #777;
}
.saved {
  display: flex;
  align-items: center;
  gap: 10px;
  height: 24px;
  margin-top: 18px;
  padding-left: 3px;
}
.saved svg {
  stroke: #999;
}
.hand {
  position: absolute;
  z-index: 4;
  left: 526px;
  top: 19px;
  width: 36px;
  height: 44px;
  filter: drop-shadow(2px 2px 2px rgba(0, 0, 0, 0.3));
}
.caption {
  position: absolute;
  z-index: 4;
  left: 0;
  right: 0;
  bottom: 62px;
  margin: 0 0 0 8px;
  text-align: center;
  font-family: 'Noto Sans CJK SC', sans-serif;
  font-size: 67px;
  line-height: 84px;
  color: #fff;
  text-shadow: 0 0 3px rgba(0, 0, 0, 0.5), 3px 2px 3px rgba(0, 0, 0, 0.8);
  pointer-events: none;
}
</style>
